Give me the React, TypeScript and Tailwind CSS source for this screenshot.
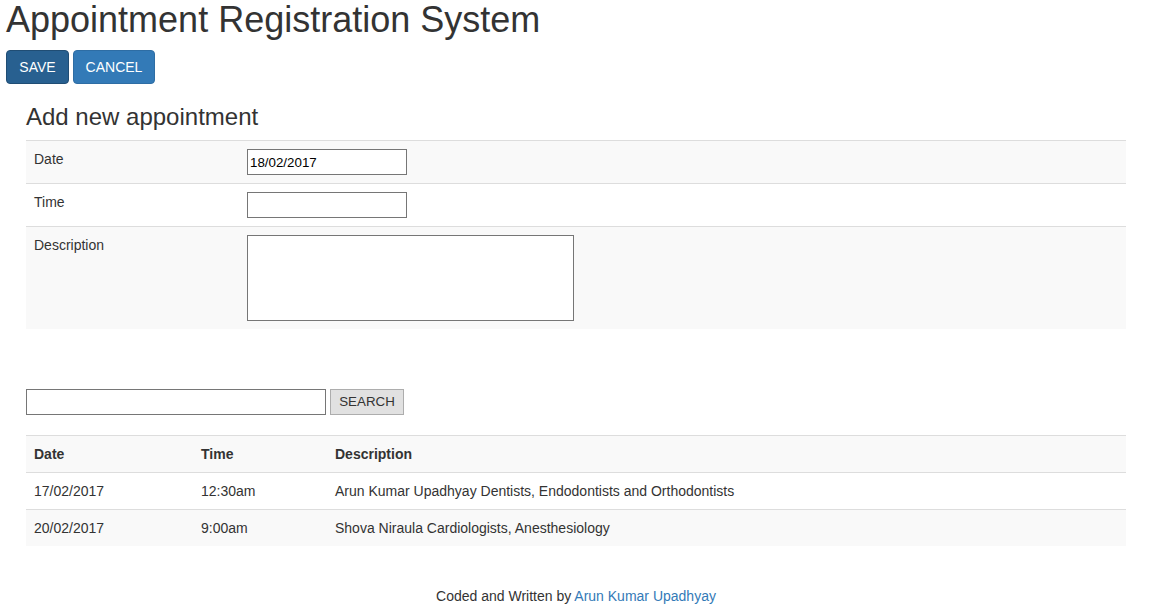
import { useState } from "react";

type appointment = {
  date: string;
  time: string;
  description: string;
};

const appointments: appointment[] = [
  { date: "17/02/2017", time: "12:30am", description: "Arun Kumar Upadhyay Dentists, Endodontists and Orthodontists" },
  { date: "20/02/2017", time: "9:00am", description: "Shova Niraula Cardiologists, Anesthesiology" },
];

function App() {
  const [date, setDate] = useState("18/02/2017");
  const [time, setTime] = useState("");
  const [description, setDescription] = useState("");
  const [search, setSearch] = useState("");

  return (
    <div className="min-h-[610px] bg-white text-[14px] leading-[20px] text-[#333] font-['Liberation_Sans',Arial,sans-serif]">
      <div className="px-[6px]">
        <h1 className="text-[36px] leading-[40px] font-normal">Appointment Registration System</h1>
        <div className="mt-[10px] flex gap-[4px]">
          <button className="h-[34px] w-[63px] rounded-[4px] border border-[#204d74] bg-[#286090] text-white text-[14px]">
            SAVE
          </button>
          <button className="h-[34px] w-[82px] rounded-[4px] border border-[#2e6da4] bg-[#337ab7] text-white text-[14px]">
            CANCEL
          </button>
        </div>
      </div>

      <div className="ml-[26px] w-[1100px]">
        <h3 className="mt-[20px] mb-[10px] text-[24px] leading-[26px] font-normal">Add new appointment</h3>
        <table className="w-full border-collapse">
          <tbody>
            <tr className="bg-[#f9f9f9] border-t border-[#ddd]">
              <td className="w-[213px] p-[8px] align-top">Date</td>
              <td className="p-[8px] align-top">
                <input
                  className="block w-[160px] h-[26px] border border-[#767676] bg-white px-[2px] text-[13.33px] text-black outline-none"
                  value={date}
                  onChange={(e) => setDate(e.target.value)}
                />
              </td>
            </tr>
            <tr className="bg-white border-t border-[#ddd]">
              <td className="p-[8px] align-top">Time</td>
              <td className="p-[8px] align-top">
                <input
                  className="block w-[160px] h-[26px] border border-[#767676] bg-white px-[2px] text-[13.33px] text-black outline-none"
                  value={time}
                  onChange={(e) => setTime(e.target.value)}
                />
              </td>
            </tr>
            <tr className="bg-[#f9f9f9] border-t border-[#ddd]">
              <td className="p-[8px] align-top">Description</td>
              <td className="p-[8px] align-top">
                <textarea
                  className="block w-[327px] h-[86px] border border-[#767676] bg-white resize-none outline-none"
                  value={description}
                  onChange={(e) => setDescription(e.target.value)}
                />
              </td>
            </tr>
          </tbody>
        </table>

        <div className="mt-[60px] flex gap-[4px]">
          <input
            className="w-[300px] h-[26px] border border-[#767676] bg-white px-[2px] text-[13.33px] outline-none"
            value={search}
            onChange={(e) => setSearch(e.target.value)}
          />
          <button className="h-[26px] w-[74px] border border-[#adadad] bg-[#e1e1e1] text-[13.33px] text-[#333]">
            SEARCH
          </button>
        </div>

        <table className="mt-[20px] w-full border-collapse">
          <tbody>
            <tr className="bg-[#f9f9f9] border-t border-[#ddd]">
              <th className="w-[167px] p-[8px] text-left font-bold">Date</th>
              <th className="w-[134px] p-[8px] text-left font-bold">Time</th>
              <th className="p-[8px] text-left font-bold">Description</th>
            </tr>
            {appointments.map((a, index) => (
              <tr key={index} className={`border-t border-[#ddd] ${index % 2 == 0 ? "bg-white" : "bg-[#f9f9f9]"}`}>
                <td className="p-[8px]">{a.date}</td>
                <td className="p-[8px]">{a.time}</td>
                <td className="p-[8px]">{a.description}</td>
              </tr>
            ))}
          </tbody>
        </table>
      </div>

      <div className="w-[1152px] mt-[40px] text-center">
        Coded and Written by <a className="text-[#337ab7]" href="#">Arun Kumar Upadhyay</a>
      </div>
    </div>
  );
}

export default App;
